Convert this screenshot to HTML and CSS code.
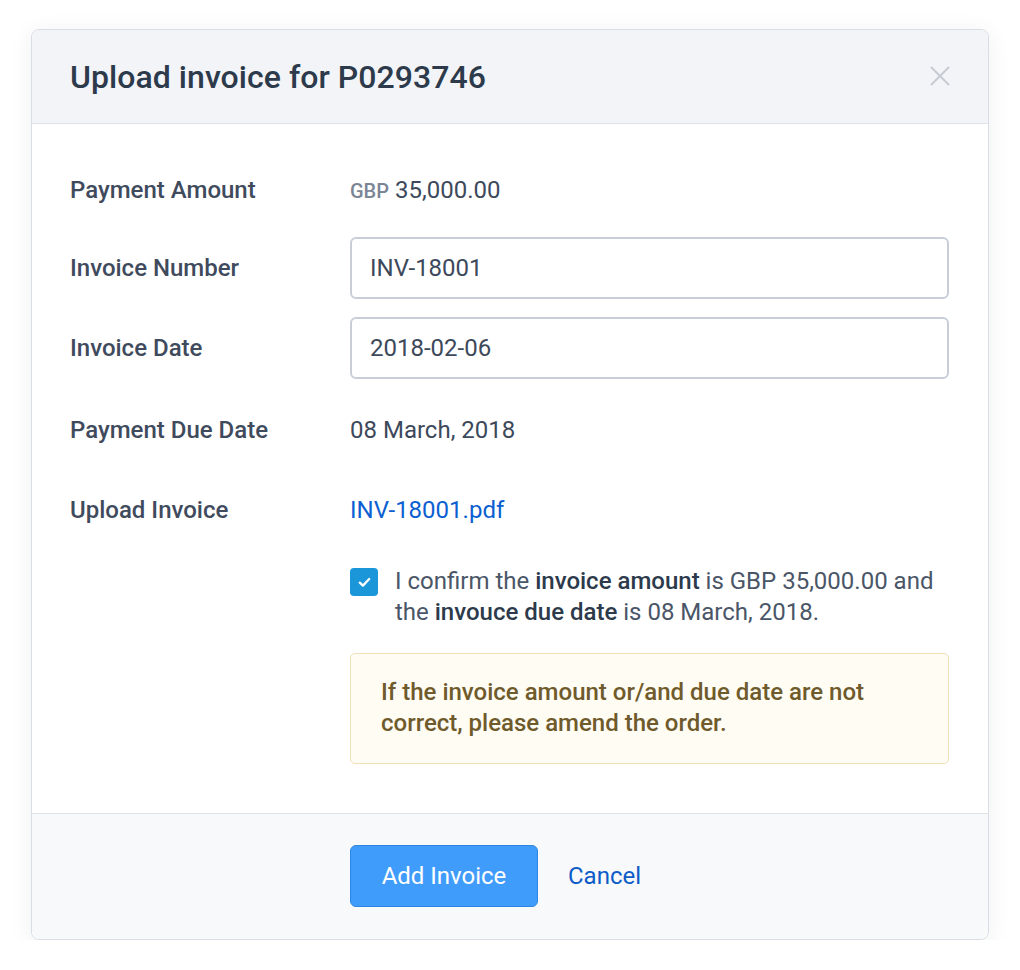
FILE: index.html
```html
<!DOCTYPE html>
<html lang="en">
<head>
<meta charset="utf-8">
<title>Upload invoice</title>
<link rel="stylesheet" href="styles.css">
</head>
<body>
<div class="modal">
  <div class="modal-header">
    <h1 class="modal-title">Upload invoice for P0293746</h1>
    <button class="close" aria-label="Close">
      <svg width="20" height="20" viewBox="0 0 20 20"><path d="M1 1L19 19M19 1L1 19" stroke="#c6cbd4" stroke-width="2" fill="none"/></svg>
    </button>
  </div>
  <div class="modal-body">
    <div class="row row-first">
      <div class="label">Payment Amount</div>
      <div class="value"><span class="currency">GBP</span> 35,000.00</div>
    </div>
    <div class="row">
      <div class="label">Invoice Number</div>
      <div class="field"><input class="input" type="text" value="INV-18001"></div>
    </div>
    <div class="row row-third">
      <div class="label">Invoice Date</div>
      <div class="field"><input class="input" type="text" value="2018-02-06"></div>
    </div>
    <div class="row">
      <div class="label">Payment Due Date</div>
      <div class="value">08 March, 2018</div>
    </div>
    <div class="row row-last">
      <div class="label">Upload Invoice</div>
      <div class="value"><a class="link" href="#">INV-18001.pdf</a></div>
    </div>
    <div class="confirm">
      <span class="checkbox">
        <svg width="13" height="11" viewBox="0 0 13 11"><path d="M1.8 5.6L4.9 8.6L11.2 2" stroke="#fff" stroke-width="2.3" fill="none" stroke-linecap="round" stroke-linejoin="round"/></svg>
      </span>
      <p class="confirm-text">I confirm the <b>invoice amount</b> is GBP 35,000.00 and the <b>invouce due date</b> is 08 March, 2018.</p>
    </div>
    <div class="warning">If the invoice amount or/and due date are not correct, please amend the order.</div>
  </div>
  <div class="modal-footer">
    <button class="btn-primary">Add Invoice</button>
    <a class="cancel" href="#">Cancel</a>
  </div>
</div>
</body>
</html>
```

FILE: styles.css
```css
* { box-sizing: border-box; }
html, body { margin: 0; padding: 0; background: #ffffff; }
body {
  font-family: Roboto, "Liberation Sans", Arial, sans-serif;
  color: #3f4a5b;
  padding: 29px 0 0 31px;
}
.modal {
  width: 958px;
  border: 1px solid #d9dde5;
  border-radius: 8px;
  background: #fff;
  overflow: hidden;
  box-shadow: 0 4px 24px rgba(30, 40, 60, 0.07);
}
.modal-header {
  height: 94px;
  background: #f3f4f7;
  border-bottom: 1px solid #dfe2e8;
  display: flex;
  align-items: center;
  justify-content: space-between;
  padding: 0 38px 0 38px;
}
.modal-title {
  margin: 0;
  font-size: 32px;
  font-weight: 500;
  color: #2c3a4b;
  letter-spacing: 0.05px;
}
.close {
  border: 0;
  background: none;
  padding: 0;
  width: 20px;
  height: 20px;
  display: flex;
  margin-top: -2px;
}
.modal-body {
  padding: 35px 39px 49px 38px;
}
.row {
  display: flex;
  align-items: center;
  height: 62px;
  margin-bottom: 18px;
}
.row-first { margin-bottom: 16px; }
.row-third { margin-bottom: 20px; }
.row-last { margin-bottom: 0; }
.label {
  width: 280px;
  flex: none;
  font-size: 24px;
  font-weight: 500;
  color: #3f4b5d;
}
.value {
  font-size: 24px;
  color: #3d495b;
}
.currency {
  font-size: 20px;
  font-weight: 500;
  color: #7b8595;
}
.field { flex: 1; }
.input {
  width: 100%;
  height: 62px;
  border: 2px solid #c8ced8;
  border-radius: 6px;
  padding: 0 18px;
  font-family: Roboto, "Liberation Sans", Arial, sans-serif;
  font-size: 24px;
  color: #3d495b;
  background: #fff;
  outline: none;
}
.link {
  color: #0b5fd1;
  text-decoration: none;
}
.confirm {
  display: flex;
  align-items: flex-start;
  margin: 25px 0 0 280px;
  gap: 17px;
}
.checkbox {
  flex: none;
  width: 28px;
  height: 28px;
  margin-top: 2px;
  background: #1b96d9;
  border-radius: 4px;
  display: flex;
  align-items: center;
  justify-content: center;
}
.confirm-text {
  margin: 0;
  font-size: 24px;
  line-height: 31px;
  color: #4a5667;
}
.confirm-text b {
  font-weight: 500;
  color: #2c3a4b;
}
.warning {
  margin: 25px 0 0 280px;
  border: 1px solid #f0e0b8;
  border-radius: 5px;
  background: #fffcf3;
  padding: 23px 30px 24px;
  font-size: 24px;
  line-height: 31px;
  font-weight: 500;
  color: #6f5a2c;
}
.modal-footer {
  background: #f8f9fa;
  border-top: 1px solid #dfe2e8;
  padding: 31px 38px 32px 318px;
  display: flex;
  align-items: center;
  gap: 30px;
}
.btn-primary {
  width: 188px;
  height: 62px;
  background: #409cfb;
  border: 1px solid #2a87e6;
  border-radius: 6px;
  color: #fff;
  font-family: Roboto, "Liberation Sans", Arial, sans-serif;
  font-size: 24px;
  font-weight: 400;
  padding: 0;
}
.cancel {
  font-size: 24px;
  color: #0d5cc7;
  text-decoration: none;
}
```
